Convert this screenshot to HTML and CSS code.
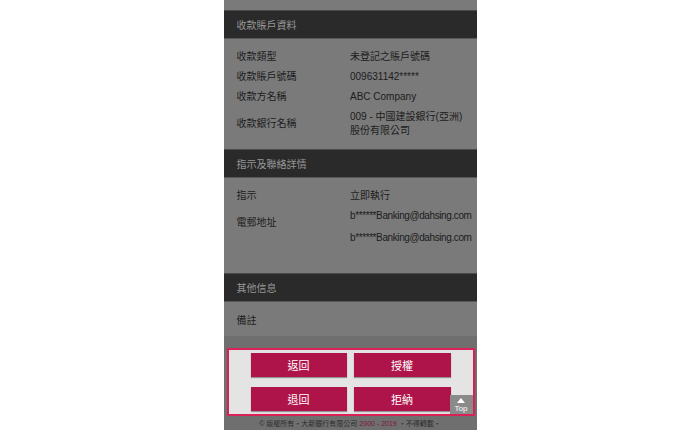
FILE: index.html
```html
<!DOCTYPE html>
<html lang="zh-Hant">
<head>
<meta charset="utf-8">
<title>收款賬戶資料</title>
<link rel="stylesheet" href="styles.css">
</head>
<body>
<div class="page">
  <div class="top-gap"></div>

  <div class="sec-head">收款賬戶資料</div>
  <div class="sec-body sec-1">
    <div class="row"><div class="lbl">收款類型</div><div class="val">未登記之賬戶號碼</div></div>
    <div class="row"><div class="lbl">收款賬戶號碼</div><div class="val">009631142*****</div></div>
    <div class="row"><div class="lbl">收款方名稱</div><div class="val">ABC Company</div></div>
    <div class="row row-center"><div class="lbl">收款銀行名稱</div><div class="val">009 - 中國建設銀行(亞洲)<br>股份有限公司</div></div>
  </div>

  <div class="sec-head">指示及聯絡詳情</div>
  <div class="sec-body sec-2">
    <div class="row"><div class="lbl">指示</div><div class="val">立即執行</div></div>
    <div class="row"><div class="lbl lbl-mail">電郵地址</div><div class="val mail"><div>b******Banking@dahsing.com</div><div class="mail-2">b******Banking@dahsing.com</div></div></div>
  </div>

  <div class="sec-head">其他信息</div>
  <div class="remark">備註</div>

  <div class="bottom">
    <div class="panel">
      <div class="btns">
        <div class="btn">返回</div>
        <div class="btn">授權</div>
        <div class="btn">退回</div>
        <div class="btn">拒納</div>
      </div>
      <div class="top-btn"><span class="tri"></span><span class="top-txt">Top</span></div>
    </div>
    <div class="footer">© 版權所有・大新銀行有限公司 <span class="years">2000 - 2019</span> ・不得轉載・</div>
  </div>
</div>
</body>
</html>
```

FILE: styles.css
```css
html, body {
  margin: 0;
  padding: 0;
  background: #ffffff;
}
body {
  font-family: "Liberation Sans", "Noto Sans CJK TC", sans-serif;
  color: #1c1c1c;
}
.page {
  width: 253px;
  height: 430px;
  margin: 0 auto;
  background: #7a7a7a;
  display: flex;
  flex-direction: column;
  overflow: hidden;
}
.top-gap {
  height: 10px;
}
.sec-head {
  height: 29px;
  box-sizing: border-box;
  background: #2a2a2a;
  border-top: 1px solid #4a4a4a;
  border-bottom: 1px solid #585858;
  color: #979797;
  font-size: 10px;
  padding-left: 13px;
  display: flex;
  align-items: center;
}
.sec-body {
  padding: 8px 13px;
  font-size: 10px;
}
.sec-1 {
  height: 110px;
  box-sizing: border-box;
}
.sec-2 {
  height: 95px;
  box-sizing: border-box;
}
.row {
  display: grid;
  grid-template-columns: minmax(0, 1fr) minmax(0, 1fr);
  padding: 3px 0;
  line-height: 14px;
}
.row-center {
  align-items: center;
}
.lbl-mail {
  padding-top: 7px;
}
.mail {
  letter-spacing: -0.4px;
  white-space: nowrap;
}
.mail-2 {
  margin-top: 8px;
}
.remark {
  height: 34px;
  padding-left: 13px;
  font-size: 10px;
  display: flex;
  align-items: center;
}
.bottom {
  flex: 1;
  background: #6f6f6f;
  padding-top: 12px;
  display: flex;
  flex-direction: column;
}
.panel {
  position: relative;
  margin: 0 2px 0 3px;
  height: 68px;
  box-sizing: border-box;
  border: 2px solid #d92158;
  background: #e4e4e4;
  padding: 3px 0;
}
.btns {
  display: grid;
  grid-template-columns: 96px 97px;
  grid-auto-rows: 24px;
  column-gap: 7px;
  row-gap: 10px;
  justify-content: center;
}
.btn {
  background: #ae1449;
  color: #ffffff;
  font-size: 11px;
  display: flex;
  align-items: center;
  justify-content: center;
  box-shadow: 0 1px 1px rgba(0, 0, 0, 0.35);
}
.top-btn {
  position: absolute;
  right: 0;
  bottom: 0;
  width: 23px;
  height: 19px;
  background: #8a8a8a;
  display: flex;
  flex-direction: column;
  align-items: center;
  justify-content: flex-start;
  padding-top: 3px;
  box-sizing: border-box;
}
.tri {
  width: 0;
  height: 0;
  border-left: 4px solid transparent;
  border-right: 4px solid transparent;
  border-bottom: 5px solid #ffffff;
}
.top-txt {
  color: #ffffff;
  font-size: 8px;
  line-height: 9px;
  margin-top: 1px;
}
.footer {
  flex: 1;
  display: flex;
  align-items: center;
  justify-content: center;
  font-size: 7px;
  color: #2c2c2c;
  white-space: nowrap;
}
.years {
  color: #7c1437;
  margin: 0 2px;
}
```
